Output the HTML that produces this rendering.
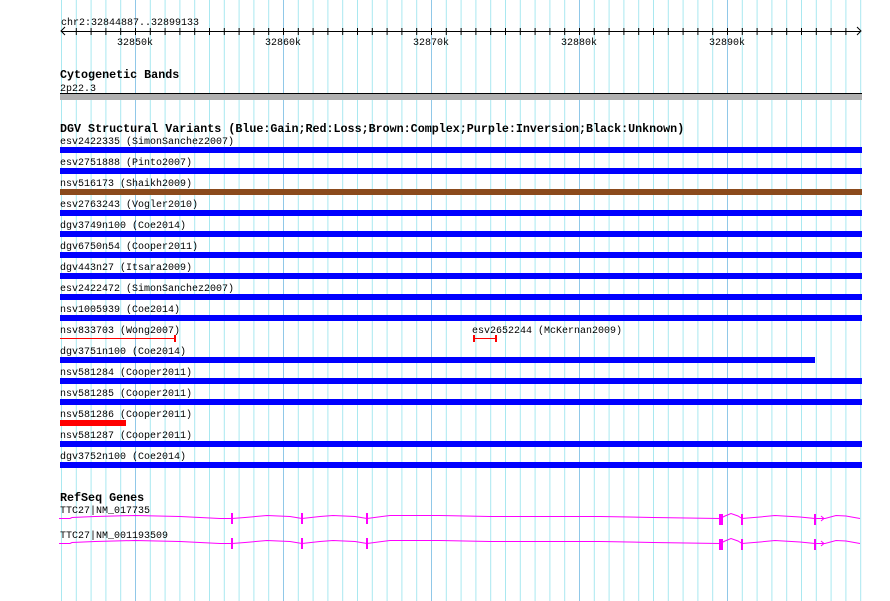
<!DOCTYPE html>
<html><head><meta charset="utf-8"><style>
html,body{margin:0;padding:0;background:#fff;width:890px;height:601px;overflow:hidden}
svg{display:block}
text{font-family:"Liberation Mono","DejaVu Sans Mono",monospace;font-size:10px;fill:#000}
.b{font-weight:bold;font-size:11.7px}
</style></head><body>
<svg width="890" height="601" viewBox="0 0 890 601" xmlns="http://www.w3.org/2000/svg" shape-rendering="crispEdges">
<defs>
<pattern id="g" x="61" y="0" width="14.8" height="601" patternUnits="userSpaceOnUse">
<rect x="0" y="0" width="1" height="601" fill="#a8e8f0"/>
</pattern>
<pattern id="t" x="61" y="0" width="14.8" height="601" patternUnits="userSpaceOnUse">
<rect x="0" y="28" width="1" height="7" fill="#000"/>
</pattern>
</defs>
<rect x="60" y="0" width="802" height="601" fill="url(#g)"/>
<g fill="#90c8e8">
<rect x="135" y="0" width="1" height="601"/><rect x="283" y="0" width="1" height="601"/>
<rect x="431" y="0" width="1" height="601"/><rect x="579" y="0" width="1" height="601"/>
<rect x="727" y="0" width="1" height="601"/>
</g>
<text x="61" y="25">chr2:32844887..32899133</text>
<rect x="61" y="31" width="799" height="1" fill="#000"/>
<rect x="70" y="28" width="790" height="7" fill="url(#t)"/>
<path d="M65 27 L61 31 L65 35 M857 27 L861 31 L857 35" stroke="#000" fill="none" shape-rendering="auto"/>
<text x="135" y="45" text-anchor="middle">32850k</text>
<text x="283" y="45" text-anchor="middle">32860k</text>
<text x="431" y="45" text-anchor="middle">32870k</text>
<text x="579" y="45" text-anchor="middle">32880k</text>
<text x="727" y="45" text-anchor="middle">32890k</text>

<text x="60" y="78" class="b">Cytogenetic Bands</text>
<text x="60" y="91">2p22.3</text>
<rect x="60" y="93" width="802" height="1" fill="#000"/>
<rect x="60" y="94" width="802" height="6" fill="#b0b0b0"/>

<text x="60" y="132" class="b">DGV Structural Variants (Blue:Gain;Red:Loss;Brown:Complex;Purple:Inversion;Black:Unknown)</text>
<text x="60" y="144">esv2422335 (SimonSanchez2007)</text>
<rect x="60" y="147" width="802" height="6" fill="#0000ff"/>
<text x="60" y="165">esv2751888 (Pinto2007)</text>
<rect x="60" y="168" width="802" height="6" fill="#0000ff"/>
<text x="60" y="186">nsv516173 (Shaikh2009)</text>
<rect x="60" y="189" width="802" height="6" fill="#8b4a1c"/>
<text x="60" y="207">esv2763243 (Vogler2010)</text>
<rect x="60" y="210" width="802" height="6" fill="#0000ff"/>
<text x="60" y="228">dgv3749n100 (Coe2014)</text>
<rect x="60" y="231" width="802" height="6" fill="#0000ff"/>
<text x="60" y="249">dgv6750n54 (Cooper2011)</text>
<rect x="60" y="252" width="802" height="6" fill="#0000ff"/>
<text x="60" y="270">dgv443n27 (Itsara2009)</text>
<rect x="60" y="273" width="802" height="6" fill="#0000ff"/>
<text x="60" y="291">esv2422472 (SimonSanchez2007)</text>
<rect x="60" y="294" width="802" height="6" fill="#0000ff"/>
<text x="60" y="312">nsv1005939 (Coe2014)</text>
<rect x="60" y="315" width="802" height="6" fill="#0000ff"/>
<text x="60" y="333">nsv833703 (Wong2007)</text>
<rect x="60" y="338" width="115" height="1" fill="#ff0000"/>
<rect x="174" y="335" width="2" height="7" fill="#ff0000"/>
<text x="472" y="333">esv2652244 (McKernan2009)</text>
<rect x="473" y="338" width="23" height="1" fill="#ff0000"/>
<rect x="473" y="335" width="2" height="7" fill="#ff0000"/>
<rect x="495" y="335" width="2" height="7" fill="#ff0000"/>
<text x="60" y="354">dgv3751n100 (Coe2014)</text>
<rect x="60" y="357" width="755" height="6" fill="#0000ff"/>
<text x="60" y="375">nsv581284 (Cooper2011)</text>
<rect x="60" y="378" width="802" height="6" fill="#0000ff"/>
<text x="60" y="396">nsv581285 (Cooper2011)</text>
<rect x="60" y="399" width="802" height="6" fill="#0000ff"/>
<text x="60" y="417">nsv581286 (Cooper2011)</text>
<rect x="60" y="420" width="66" height="6" fill="#ff0000"/>
<text x="60" y="438">nsv581287 (Cooper2011)</text>
<rect x="60" y="441" width="802" height="6" fill="#0000ff"/>
<text x="60" y="459">dgv3752n100 (Coe2014)</text>
<rect x="60" y="462" width="802" height="6" fill="#0000ff"/>

<text x="60" y="501" class="b">RefSeq Genes</text>
<text x="60" y="513">TTC27|NM_017735</text>
<text x="60" y="538">TTC27|NM_001193509</text>
<g id="gene1">
<polyline fill="none" stroke="#ff00ff" stroke-width="1" shape-rendering="auto" points="59,518.5 70,518.5 72,517.5 95,516.5 135,515.5 180,516.5 220,518.5 232,518.5 245,517.5 267,515.5 290,516.5 302,518.5 320,516.5 333,515.5 355,516.5 367,518.5 390,515.5 440,515.5 490,516.5 600,516.5 653,517.5 720,518.5 725,516 731,513.5 738,516 742,518.5 760,517 775,515.5 800,517 815,518.5 825,518.5 836,515.5 846,516 860,518.5"/>
<g fill="#ff00ff">
<rect x="231" y="513" width="2" height="11"/><rect x="301" y="513" width="2" height="11"/>
<rect x="366" y="513" width="2" height="11"/><rect x="719" y="514" width="4" height="11"/>
<rect x="741" y="514" width="2" height="11"/><rect x="814" y="514" width="2" height="11"/>
</g>
<path d="M821 516 L824 518.5 L821 521" stroke="#ff00ff" fill="none" shape-rendering="auto"/>
</g>
<use href="#gene1" y="25"/>
</svg>
</body></html>
